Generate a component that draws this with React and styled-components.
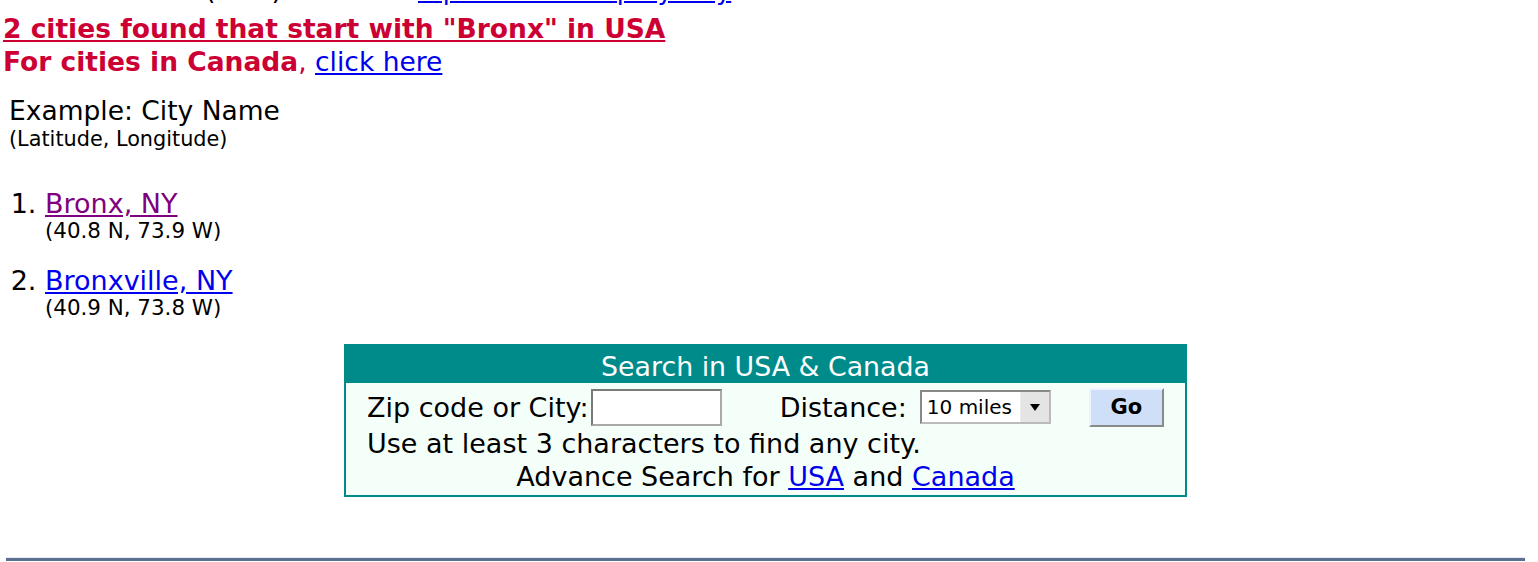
import styled, { createGlobalStyle } from "styled-components";

const GlobalStyle = createGlobalStyle`
  body {
    margin: 0;
    background: #fff;
  }
`;

const Page = styled.div`
  font-family: "DejaVu Sans", Verdana, sans-serif;
  color: #000;
  padding: 0 14px 0 3px;
`;

// bottom of the line above, cut off by the top of the window
const TopLine = styled.div`
  margin-top: -24px;
  height: 27px;
  line-height: 27px;
  font-size: 27px;
  white-space: nowrap;
`;

const Paren = styled.span`
  margin-left: 202px;
`;

const Link = styled.a`
  color: ${({ $visited }) => ($visited ? "#800080" : "#0000ee")};
  text-decoration: underline;
  margin-left: ${({ $gap }) => $gap || 0}px;
`;

const TopLink = styled(Link)`
  font-size: 25.7px;
`;

const Heading = styled.div`
  margin-top: 9px;
  color: #cc0033;
  font-weight: bold;
  font-size: 26.5px;
  line-height: 33px;
  white-space: nowrap;
`;

const HeadLine = styled.div`
  text-decoration: ${({ $underline }) => ($underline ? "underline" : "none")};
`;

const Comma = styled.span`
  font-weight: normal;
`;

const PlainLink = styled(Link)`
  font-weight: normal;
`;

const Results = styled.div`
  padding-left: 6px;
  margin-top: 18px;
`;

const Legend = styled.div`
  font-size: 26.5px;
  line-height: 30px;
`;

const LegendSub = styled.div`
  font-size: 20.8px;
  line-height: 26px;
`;

const CityList = styled.ol`
  margin: 36px 0 0;
  padding: 0 0 0 36px;
  font-size: 27px;
`;

const CityItem = styled.li`
  line-height: 32px;

  & + & {
    margin-top: 23px;
  }
`;

const Coords = styled.div`
  font-size: 21.4px;
  line-height: 22px;
`;

const SearchBox = styled.div`
  width: 839px;
  margin: 25px 0 0 341px;
  border: 2px solid #008b8b;
  background: #f5fffa;
  font-size: 27px;
`;

const SearchTitle = styled.div`
  background: #008b8b;
  color: #fff;
  text-align: center;
  font-size: 26.8px;
  height: 37px;
  line-height: 41px;
  overflow: hidden;
`;

const SearchBody = styled.div`
  padding: 4px 21px 2px;
`;

const FormRow = styled.div`
  display: flex;
  align-items: center;
  height: 40px;
`;

const Label = styled.span`
  margin-left: ${({ $gap }) => $gap || 0}px;
  white-space: nowrap;
`;

const TextInput = styled.input`
  box-sizing: border-box;
  width: 131px;
  height: 37px;
  margin: 0 0 0 2px;
  border: 2px solid #7a7a7a;
  border-right-color: #a9a9a9;
  border-bottom-color: #a9a9a9;
  background: #fff;
`;

const SelectBox = styled.div`
  box-sizing: border-box;
  margin-left: 13px;
  width: 134px;
  height: 34px;
  display: flex;
  align-items: stretch;
  border: 2px solid #888;
  border-right-color: #bbb;
  border-bottom-color: #bbb;
  background: #fff;
  font-size: 20px;
`;

const SelectText = styled.span`
  flex: 1;
  padding-left: 5px;
  line-height: 31px;
`;

const SelectArrow = styled.span`
  width: 28px;
  background: #e4e4e4;
  border-left: 1px solid #ececec;
  display: flex;
  align-items: center;
  justify-content: center;
`;

const GoButton = styled.button`
  box-sizing: border-box;
  margin-left: 38px;
  width: 77px;
  height: 39px;
  background: #cfdff8;
  border: 2px solid;
  border-color: #eef4ff #8a8a8a #8a8a8a #eef4ff;
  font-family: "DejaVu Sans", Verdana, sans-serif;
  font-weight: bold;
  font-size: 21px;
  color: #000;
  padding: 0;
`;

const Hint = styled.div`
  line-height: 33px;
  white-space: nowrap;
`;

const Advance = styled.div`
  line-height: 33px;
  text-align: center;
  white-space: nowrap;
`;

const Footer = styled.div`
  margin: 60px 0 0 3px;
  width: 1519px;
  height: 3px;
  border-top: 1px solid #e4ecf6;
  background: #5d6f8e;
`;

export default function App() {
  return (
    <>
      <GlobalStyle />
      <Page>
        <TopLine>
          <Paren>(USA)</Paren>
          <TopLink href="#" $gap={136}>
            Zip Code Lookup by City
          </TopLink>
        </TopLine>
        <Heading>
          <HeadLine $underline>2 cities found that start with "Bronx" in USA</HeadLine>
          <HeadLine>
            For cities in Canada<Comma>, </Comma>
            <PlainLink href="#">click here</PlainLink>
          </HeadLine>
        </Heading>
        <Results>
          <Legend>Example: City Name</Legend>
          <LegendSub>(Latitude, Longitude)</LegendSub>
          <CityList>
            <CityItem>
              <Link href="#" $visited>
                Bronx, NY
              </Link>
              <Coords>(40.8 N, 73.9 W)</Coords>
            </CityItem>
            <CityItem>
              <Link href="#">Bronxville, NY</Link>
              <Coords>(40.9 N, 73.8 W)</Coords>
            </CityItem>
          </CityList>
        </Results>
        <SearchBox>
          <SearchTitle>Search in USA &amp; Canada</SearchTitle>
          <SearchBody>
            <FormRow>
              <Label>Zip code or City:</Label>
              <TextInput type="text" />
              <Label $gap={58}>Distance:</Label>
              <SelectBox>
                <SelectText>10 miles</SelectText>
                <SelectArrow>
                  <svg width="10" height="7" viewBox="0 0 10 7">
                    <path d="M0 0h10L5 7z" fill="#000" />
                  </svg>
                </SelectArrow>
              </SelectBox>
              <GoButton>Go</GoButton>
            </FormRow>
            <Hint>Use at least 3 characters to find any city.</Hint>
            <Advance>
              Advance Search for <Link href="#">USA</Link> and{" "}
              <Link href="#">Canada</Link>
            </Advance>
          </SearchBody>
        </SearchBox>
        <Footer />
      </Page>
    </>
  );
}
